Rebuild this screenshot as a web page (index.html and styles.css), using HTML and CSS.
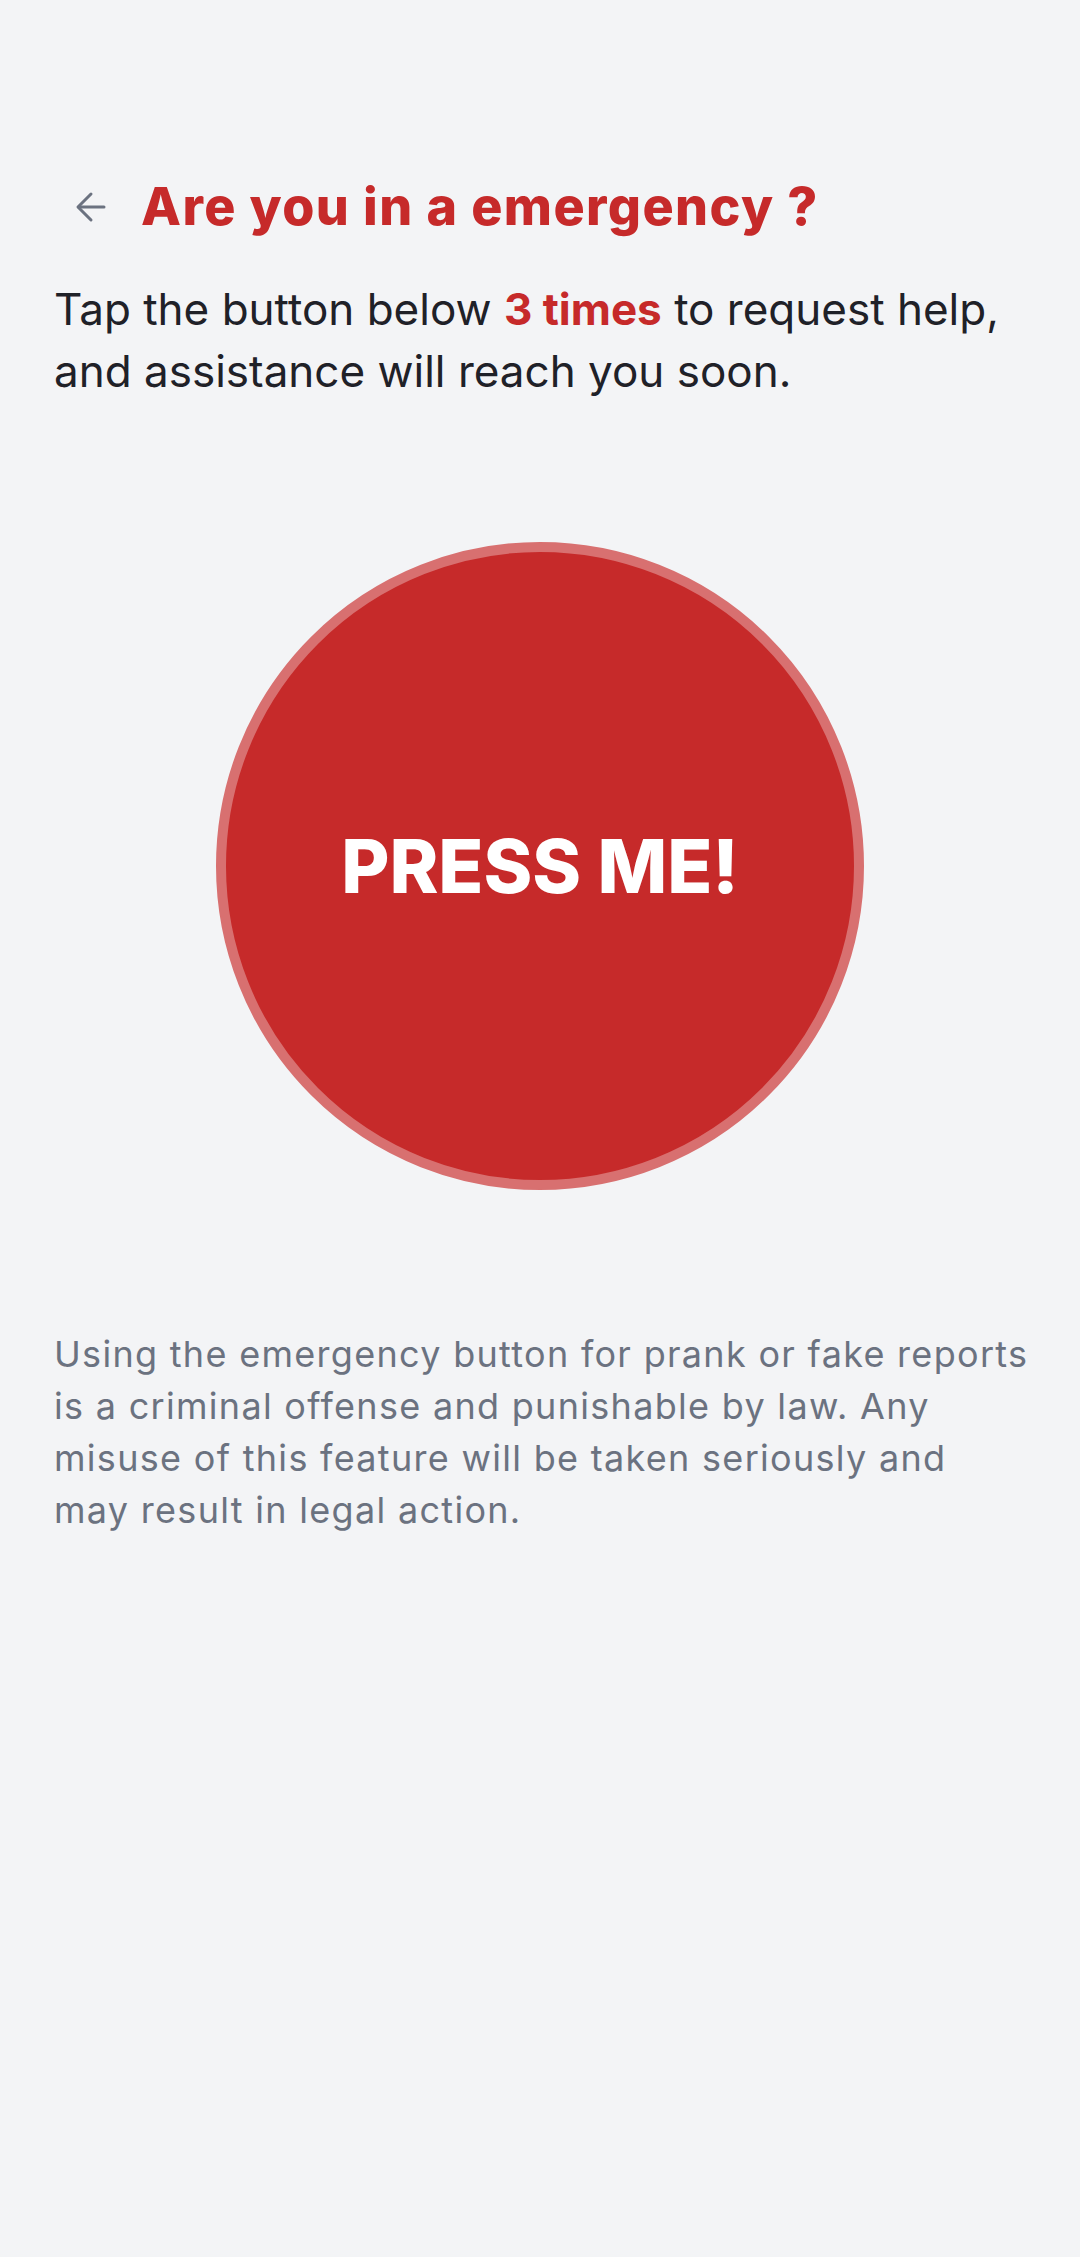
FILE: index.html
```html
<!DOCTYPE html>
<html lang="en">
<head>
<meta charset="utf-8">
<title>Emergency</title>
<link rel="stylesheet" href="styles.css">
</head>
<body>
<main class="screen">
  <header class="header">
    <button class="back" aria-label="Back">
      <svg viewBox="0 0 32 32" width="32" height="32" fill="none" stroke="#6b7280" stroke-width="3" stroke-linecap="round" stroke-linejoin="round">
        <path d="M29 16H4"/>
        <path d="M16 3L3 16l13 13"/>
      </svg>
    </button>
    <h1 class="title">Are you in a emergency ?</h1>
  </header>
  <p class="intro">Tap the button below <strong class="accent">3 times</strong> to request help,<br>and assistance will reach you soon.</p>
  <div class="button-wrap">
    <button class="panic">PRESS ME!</button>
  </div>
  <p class="disclaimer">Using the emergency button for prank or fake reports<br>is a criminal offense and punishable by law. Any<br>misuse of this feature will be taken seriously and<br>may result in legal action.</p>
</main>
</body>
</html>
```

FILE: styles.css
```css
html, body {
  margin: 0;
  padding: 0;
  background: #f3f4f6;
}
body {
  width: 1080px;
  height: 2257px;
  font-family: "Inter", "Open Sans", sans-serif;
  color: #1f2128;
}
.screen {
  padding: 176px 54px 0 54px;
}
.header {
  display: flex;
  align-items: center;
  gap: 34px;
  padding-left: 21px;
  height: 62px;
}
.back {
  border: 0;
  background: transparent;
  padding: 0;
  width: 32px;
  height: 32px;
  display: flex;
}
.title {
  margin: 0;
  font-size: 52px;
  line-height: 62px;
  font-weight: 800;
  color: #c62a2a;
  letter-spacing: 1.4px;
}
.intro {
  margin: 40px 0 0 0;
  font-size: 44px;
  line-height: 62px;
  font-weight: 400;
  white-space: nowrap;
}
.accent {
  color: #c62a2a;
  font-weight: 700;
}
.button-wrap {
  display: flex;
  justify-content: center;
  margin-top: 140px;
}
.panic {
  width: 648px;
  height: 648px;
  border-radius: 50%;
  border: 10px solid #d87070;
  background: #c62a2a;
  color: #ffffff;
  font-family: "Inter", sans-serif;
  font-weight: 800;
  font-size: 74px;
  padding: 0;
  display: flex;
  align-items: center;
  justify-content: center;
  box-sizing: border-box;
}
.disclaimer {
  margin: 138px 0 0 0;
  font-size: 36px;
  line-height: 52px;
  color: #6b7280;
  letter-spacing: 1.3px;
  white-space: nowrap;
}
```
